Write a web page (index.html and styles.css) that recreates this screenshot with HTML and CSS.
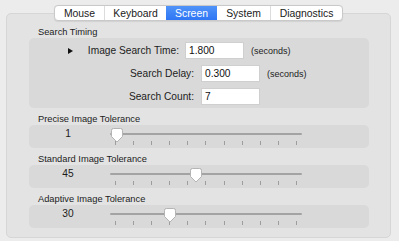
FILE: index.html
```html
<!DOCTYPE html>
<html>
<head>
<meta charset="utf-8">
<link rel="stylesheet" href="styles.css">
</head>
<body>
<div class="window">
  <div class="tabs">
    <div class="tab t-mouse">Mouse</div>
    <div class="tab t-keyboard">Keyboard</div>
    <div class="tab t-screen selected">Screen</div>
    <div class="tab t-system">System</div>
    <div class="tab t-diag">Diagnostics</div>
  </div>
  <div class="panel">
    <div class="section-label">Search Timing</div>
    <div class="box timing">
      <div class="row row-first">
        <span class="disclosure"></span>
        <span class="lbl lbl-first">Image Search Time:</span>
        <span class="field">1.800</span>
        <span class="unit">(seconds)</span>
      </div>
      <div class="row">
        <span class="lbl">Search Delay:</span>
        <span class="field">0.300</span>
        <span class="unit">(seconds)</span>
      </div>
      <div class="row">
        <span class="lbl">Search Count:</span>
        <span class="field">7</span>
      </div>
    </div>

    <div class="section-label gap">Precise Image Tolerance</div>
    <div class="box slider-box">
      <span class="value">1</span>
      <div class="slider">
        <div class="track"></div>
        <div class="ticks"><i></i><i></i><i></i><i></i><i></i><i></i><i></i><i></i><i></i><i></i><i></i></div>
        <svg class="knob" style="left:1px" width="12" height="15" viewBox="0 0 12 15"><path d="M0.5 2.5 Q0.5 0.5 2.5 0.5 H9.5 Q11.5 0.5 11.5 2.5 V8.5 L6 14 L0.5 8.5 Z" fill="#fff" stroke="#b4b4b4" stroke-width="1"/></svg>
      </div>
    </div>

    <div class="section-label gap">Standard Image Tolerance</div>
    <div class="box slider-box">
      <span class="value">45</span>
      <div class="slider">
        <div class="track"></div>
        <div class="ticks"><i></i><i></i><i></i><i></i><i></i><i></i><i></i><i></i><i></i><i></i><i></i></div>
        <svg class="knob" style="left:80px" width="12" height="15" viewBox="0 0 12 15"><path d="M0.5 2.5 Q0.5 0.5 2.5 0.5 H9.5 Q11.5 0.5 11.5 2.5 V8.5 L6 14 L0.5 8.5 Z" fill="#fff" stroke="#b4b4b4" stroke-width="1"/></svg>
      </div>
    </div>

    <div class="section-label gap">Adaptive Image Tolerance</div>
    <div class="box slider-box">
      <span class="value">30</span>
      <div class="slider">
        <div class="track"></div>
        <div class="ticks"><i></i><i></i><i></i><i></i><i></i><i></i><i></i><i></i><i></i><i></i><i></i></div>
        <svg class="knob" style="left:54px" width="12" height="15" viewBox="0 0 12 15"><path d="M0.5 2.5 Q0.5 0.5 2.5 0.5 H9.5 Q11.5 0.5 11.5 2.5 V8.5 L6 14 L0.5 8.5 Z" fill="#fff" stroke="#b4b4b4" stroke-width="1"/></svg>
      </div>
    </div>
  </div>
</div>
</body>
</html>
```
FILE: styles.css
```css
html, body {
  margin: 0;
  padding: 0;
  background: #ececec;
  overflow: hidden;
}
body {
  font-family: "Liberation Sans", Arial, sans-serif;
  color: #1c1c1c;
  width: 399px;
  height: 241px;
}
.window {
  display: flex;
  flex-direction: column;
  padding-left: 6px;
  width: 385px;
}
.tabs {
  position: relative;
  z-index: 2;
  align-self: center;
  display: flex;
  margin-top: 5px;
  height: 16px;
  box-sizing: border-box;
  background: #fff;
  border: 1px solid #c9c9c9;
  border-radius: 4px;
  box-shadow: 0 0.5px 1px rgba(0,0,0,0.08);
  overflow: hidden;
}
.tab {
  display: flex;
  align-items: center;
  justify-content: center;
  font-size: 10.4px;
  color: #1a1a1a;
  border-left: 1px solid #dcdcdc;
  box-sizing: border-box;
}
.tab:first-child { border-left: none; }
.t-mouse { width: 49px; }
.t-keyboard { width: 62px; }
.t-screen { width: 51px; }
.t-system { width: 53px; }
.t-diag { width: 72px; }
.tab.selected {
  background: linear-gradient(#4f93f8, #2f76f5);
  color: #fff;
  border-left: none;
}
.tab.selected + .tab { border-left: none; }
.panel {
  margin-top: -8px;
  height: 225px;
  box-sizing: border-box;
  background: #e3e3e3;
  border: 1px solid #d6d6d6;
  border-radius: 5px;
  padding: 13px 21px 9px 22px;
  display: flex;
  flex-direction: column;
}
.section-label {
  font-size: 9.3px;
  line-height: 11px;
  padding-left: 9px;
}
.section-label.gap { margin-top: 6px; }
.box {
  background: #d9d9d9;
  border-radius: 5px;
  width: 340px;
  box-sizing: border-box;
}
.timing {
  height: 70px;
  padding-top: 4px;
  display: flex;
  flex-direction: column;
  gap: 6px;
}
.row {
  display: flex;
  align-items: center;
  height: 17px;
  font-size: 10.2px;
}
.row-first { padding-left: 39px; }
.disclosure {
  width: 0;
  height: 0;
  border-top: 3px solid transparent;
  border-bottom: 3px solid transparent;
  border-left: 5px solid #111;
  margin-right: 12px;
}
.lbl {
  width: 165px;
  text-align: right;
  margin-right: 7px;
  white-space: nowrap;
}
.lbl.lbl-first {
  width: 94px;
  margin-right: 6px;
}
.field {
  width: 59px;
  height: 17px;
  box-sizing: border-box;
  background: #fff;
  border: 1px solid #cfcfcf;
  padding-left: 3px;
  display: flex;
  align-items: center;
  font-size: 10.2px;
  color: #111;
}
.unit {
  margin-left: 7px;
  font-size: 9px;
}
.slider-box {
  height: 23px;
  display: flex;
}
.value {
  width: 78px;
  text-align: center;
  font-size: 10.2px;
  line-height: 10px;
  padding-top: 4px;
}
.slider {
  position: relative;
  margin-left: 3px;
  width: 192px;
  height: 23px;
}
.track {
  margin-top: 8px;
  height: 2px;
  background: #a3a3a3;
  border-radius: 1px;
}
.ticks {
  margin-top: 6px;
  margin-left: 5px;
  width: 182px;
  display: flex;
  justify-content: space-between;
}
.ticks i {
  display: block;
  width: 1px;
  height: 4px;
  background: #9d9d9d;
}
.knob {
  position: absolute;
  top: 3px;
  filter: drop-shadow(0 0.5px 0.5px rgba(0,0,0,0.15));
}
```
